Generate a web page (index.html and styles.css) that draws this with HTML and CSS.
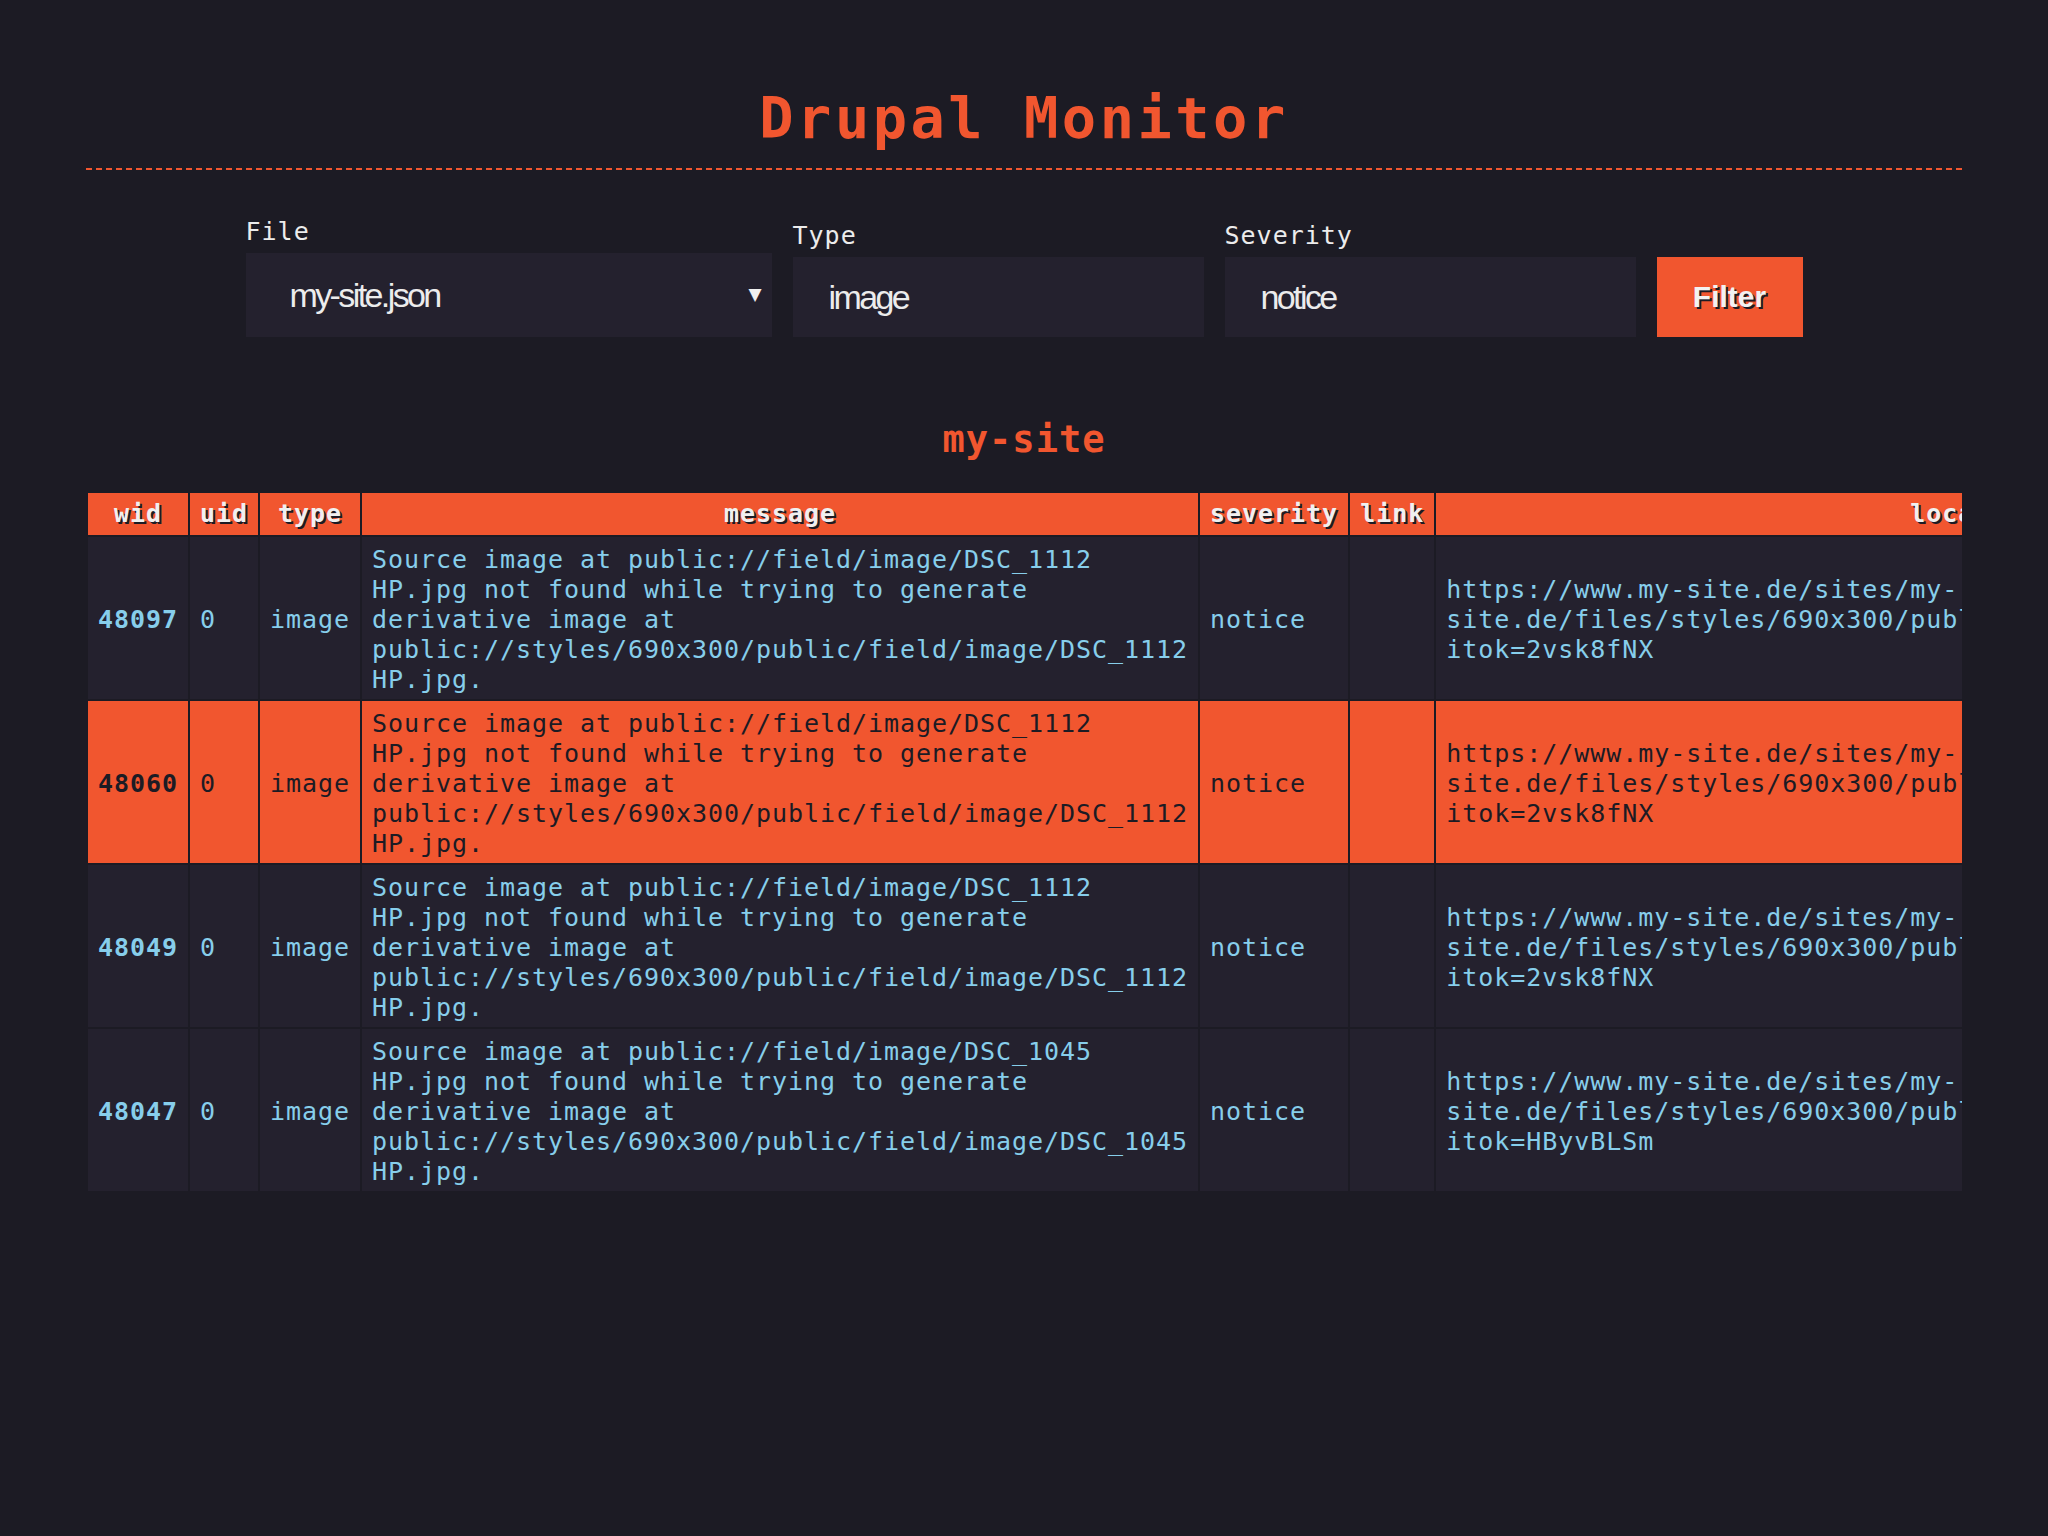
FILE: index.html
```html
<!DOCTYPE html>
<html lang="en">
<head>
<meta charset="utf-8">
<title>Drupal Monitor</title>
<link rel="stylesheet" href="styles.css">
</head>
<body>
<div class="page">
  <h1 class="title">Drupal Monitor</h1>

  <form class="filters">
    <div class="field">
      <label class="label" for="file">File</label>
      <div class="select-wrap">
        <select id="file" class="control select">
          <option>my-site.json</option>
        </select>
      </div>
    </div>
    <div class="field">
      <label class="label" for="type">Type</label>
      <input id="type" class="control input" type="text" value="image">
    </div>
    <div class="field">
      <label class="label" for="severity">Severity</label>
      <input id="severity" class="control input" type="text" value="notice">
    </div>
    <button class="btn" type="button">Filter</button>
  </form>

  <h2 class="site">my-site</h2>

  <div class="table-wrap">
    <table class="log">
      <thead>
        <tr>
          <th>wid</th>
          <th>uid</th>
          <th>type</th>
          <th>message</th>
          <th>severity</th>
          <th>link</th>
          <th>location</th>
        </tr>
      </thead>
      <tbody>
        <tr>
          <td class="wid">48097</td>
          <td>0</td>
          <td>image</td>
          <td>Source image at public://field/image/DSC_1112 HP.jpg not found while trying to generate derivative image at public://styles/690x300/public/field/image/DSC_1112 HP.jpg.</td>
          <td>notice</td>
          <td></td>
          <td>https://www.my-site.de/sites/my-site.de/files/styles/690x300/public/field/image/DSC_1112%20HP.jpg?itok=2vsk8fNX</td>
        </tr>
        <tr class="active">
          <td class="wid">48060</td>
          <td>0</td>
          <td>image</td>
          <td>Source image at public://field/image/DSC_1112 HP.jpg not found while trying to generate derivative image at public://styles/690x300/public/field/image/DSC_1112 HP.jpg.</td>
          <td>notice</td>
          <td></td>
          <td>https://www.my-site.de/sites/my-site.de/files/styles/690x300/public/field/image/DSC_1112%20HP.jpg?itok=2vsk8fNX</td>
        </tr>
        <tr>
          <td class="wid">48049</td>
          <td>0</td>
          <td>image</td>
          <td>Source image at public://field/image/DSC_1112 HP.jpg not found while trying to generate derivative image at public://styles/690x300/public/field/image/DSC_1112 HP.jpg.</td>
          <td>notice</td>
          <td></td>
          <td>https://www.my-site.de/sites/my-site.de/files/styles/690x300/public/field/image/DSC_1112%20HP.jpg?itok=2vsk8fNX</td>
        </tr>
        <tr>
          <td class="wid">48047</td>
          <td>0</td>
          <td>image</td>
          <td>Source image at public://field/image/DSC_1045 HP.jpg not found while trying to generate derivative image at public://styles/690x300/public/field/image/DSC_1045 HP.jpg.</td>
          <td>notice</td>
          <td></td>
          <td>https://www.my-site.de/sites/my-site.de/files/styles/690x300/public/field/image/DSC_1045%20HP.jpg?itok=HByvBLSm</td>
        </tr>
      </tbody>
    </table>
  </div>
</div>
</body>
</html>
```

FILE: styles.css
```css
html, body {
  margin: 0;
  padding: 0;
  background: #1c1b24;
}

body {
  font-family: "DejaVu Sans Mono", monospace;
  color: #ececec;
  letter-spacing: 1px;
}

.page {
  padding: 85px 86px 40px;
}

.title {
  margin: 0;
  padding-bottom: 17px;
  border-bottom: 2px dashed #f1562f;
  text-align: center;
  font-size: 57px;
  font-weight: bold;
  letter-spacing: 3.5px;
  line-height: normal;
  color: #f1562f;
}

/* ---------- filter form ---------- */
.filters {
  margin-top: 47px;
  display: flex;
  justify-content: center;
  align-items: flex-end;
  gap: 21px;
}

.field {
  display: flex;
  flex-direction: column;
}

.label {
  font-size: 25px;
  line-height: 30px;
  letter-spacing: 1px;
  color: #ececec;
  margin-bottom: 6px;
}

.control {
  font-family: "Liberation Sans Narrow", "Liberation Sans", sans-serif;
  font-stretch: condensed;
  font-size: 34px;
  letter-spacing: -2.6px;
  color: #ececec;
  background: #24212e;
  border: none;
  border-radius: 0;
  outline: none;
  margin: 0;
  box-sizing: border-box;
}

.select-wrap {
  position: relative;
}

.select-wrap::after {
  content: "\25BC";
  position: absolute;
  right: 9px;
  top: 33px;
  font-family: "DejaVu Sans", sans-serif;
  font-size: 17px;
  line-height: 17px;
  color: #f0f0f0;
  pointer-events: none;
}

.select {
  -webkit-appearance: none;
  appearance: none;
  width: 526px;
  height: 84px;
  padding: 0 40px 0 44px;
}

.input {
  width: 411px;
  height: 80px;
  padding: 0 36px;
}

.btn {
  width: 146px;
  height: 80px;
  border: none;
  border-radius: 0;
  background: #f1562f;
  color: #f2f2f2;
  font-family: "Liberation Sans", Arial, sans-serif;
  font-weight: bold;
  font-size: 30px;
  letter-spacing: 0;
  text-shadow: 2px 2px 0 #1c1b24;
  cursor: pointer;
}

/* ---------- site heading ---------- */
.site {
  margin: 81px 0 0;
  text-align: center;
  font-size: 37px;
  font-weight: bold;
  line-height: normal;
  color: #f1562f;
}

/* ---------- table ---------- */
.table-wrap {
  margin-top: 30px;
  overflow: hidden;
}

.log {
  border-collapse: collapse;
  font-size: 25px;
  line-height: 30px;
  letter-spacing: 0.95px;
}

.log th,
.log td {
  border: 2px solid #1c1b24;
  padding: 6px 10px;
}

.log th {
  background: #f1562f;
  color: #f0f0f0;
  font-weight: bold;
  text-align: center;
  text-shadow: 2px 2px 0 #1c1b24;
}

.log td {
  background: #24212e;
  color: #87ceeb;
  text-align: left;
  vertical-align: middle;
  padding-top: 8px;
  padding-bottom: 4px;
}

.log td.wid {
  font-weight: bold;
}

.log tr.active td {
  background: #f1562f;
  color: #1c1b24;
}
```
